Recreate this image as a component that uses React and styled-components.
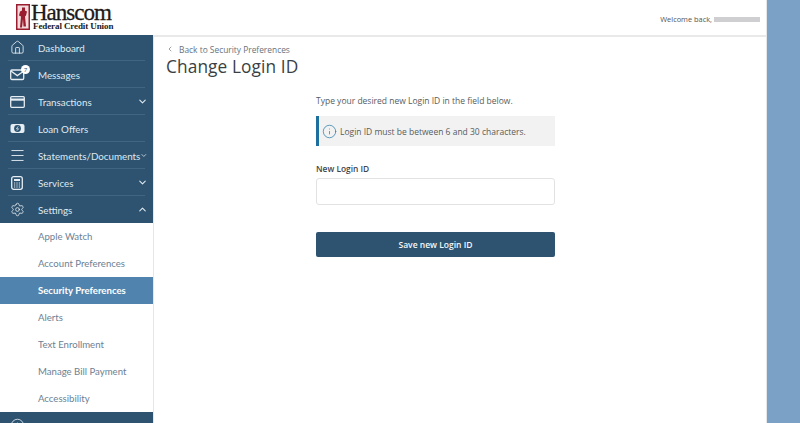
import React from "react";
import styled, { createGlobalStyle } from "styled-components";
import { ChevronDown, ChevronUp, ChevronLeft, Menu, Settings, House, Info } from "lucide-react";

const Global = createGlobalStyle`
  html, body { margin: 0; padding: 0; height: 100%; overflow: hidden; background: #fff; }
  body { font-family: "Open Sans", "Liberation Sans", sans-serif; }
  * { box-sizing: border-box; }
`;

const Page = styled.div`
  width: 800px; height: 423px; display: flex; overflow: hidden;
`;
const Main = styled.div`
  width: 767px; height: 423px; display: flex; flex-direction: column; background: #fff;
  border-right: 1px solid #e4e6e8;
`;
const Edge = styled.div`
  width: 33px; height: 423px; background: #7ba2c6;
`;
const Header = styled.header`
  height: 35px; flex: none; display: flex; align-items: center; justify-content: space-between;
  padding: 0 6px 0 16px; position: relative; z-index: 1; background: #fff;
`;
const Logo = styled.div`
  display: flex; align-items: center; gap: 1px; height: 30px; margin-top: -1px;
`;
const LogoText = styled.div`
  display: flex; flex-direction: column; font-family: "Liberation Serif", serif; color: #1d1a1a;
`;
const LogoName = styled.span`
  font-size: 23px; line-height: 19px; letter-spacing: -1px; font-weight: 400; -webkit-text-stroke: 0.3px #1d1a1a;
`;
const LogoSub = styled.span`
  font-size: 9px; line-height: 9px; letter-spacing: -0.1px; font-weight: 700; padding-left: 2px;
`;
const Welcome = styled.div`
  display: flex; align-items: center; gap: 2px; font-size: 7.4px; color: #555; margin-top: 3px;
`;
const Blur = styled.span`
  display: block; width: 46px; height: 5px; background: #cfcfd2; filter: blur(0.6px);
`;
const Body = styled.div`
  flex: 1; display: flex; min-height: 0;
`;
const Side = styled.nav`
  width: 154px; flex: none; display: flex; flex-direction: column; overflow: hidden; margin-top: -1px;
  border-right: 1px solid #e4e6e8;
`;
const NavRow = styled.div`
  height: 27px; flex: none; display: flex; align-items: center; position: relative;
  background: #2d5370; color: #dfe8ef; font-family: "Lato", sans-serif; font-size: 9.8px; padding: 0 5px 0 8px;
  &::after {
    content: ""; position: absolute; left: 8px; right: 8px; bottom: 0; height: 1px; background: ${p => p.$last ? "transparent" : "#3f6582"};
  }
`;
const IconSlot = styled.span`
  width: 18px; height: 18px; display: flex; align-items: center; justify-content: center; margin-right: 12px; flex: none; position: relative;
`;
const Badge = styled.span`
  position: absolute; top: -1px; right: -4px; width: 9px; height: 9px; border-radius: 50%;
  background: #fff; color: #2d5370; font-size: 6px; line-height: 9px; text-align: center;
`;
const NavLabel = styled.span`
  flex: 1; white-space: nowrap;
`;
const SubRow = styled.div`
  height: 27px; flex: none; display: flex; align-items: center; padding-left: 38px; font-family: "Lato", sans-serif; font-size: 9.6px;
  color: ${p => p.$active ? "#fff" : "#6d8193"}; background: ${p => p.$active ? "#5083ad" : "#fff"};
  font-weight: ${p => p.$active ? 700 : 400};
`;
const Content = styled.main`
  flex: 1; padding: 6px 0 0 12px; min-width: 0; border-top: 2px solid #e9e9e9;
`;
const Back = styled.div`
  display: flex; align-items: center; gap: 5px; font-size: 8.4px; color: #67737d; height: 12px;
`;
const Title = styled.h1`
  margin: -1px 0 0; font-weight: 400; font-size: 17.3px; line-height: 26px; color: #3a3f44; letter-spacing: 0.1px;
`;
const Form = styled.div`
  width: 239px; margin: 14px 0 0 150px; display: flex; flex-direction: column;
`;
const Lead = styled.p`
  margin: 0; font-size: 8.5px; line-height: 14px; color: #565c61;
`;
const Notice = styled.div`
  margin-top: 8px; height: 30px; display: flex; align-items: center; gap: 3px; background: #f2f2f2;
  border-left: 3px solid #1f6f9e; padding-left: 3px; font-size: 8.5px; color: #565c61;
`;
const FieldLabel = styled.label`
  margin-top: 16px; font-size: 8.4px; line-height: 14px; font-weight: 600; color: #3f454a;
`;
const Input = styled.input`
  margin-top: 2px; height: 27px; width: 100%; border: 1px solid #e2e2e2; border-radius: 3px; background: #fff; outline: none;
`;
const Save = styled.button`
  margin-top: 27px; height: 25px; width: 100%; border: 0; border-radius: 2px; background: #2d5370; color: #f4f7f9;
  font: 600 8.5px "Open Sans", sans-serif;
`;

const strokes = { fill: "none", stroke: "#e6edf3", strokeWidth: 1.3 };

const Mail = () => (
  <svg width="15" height="12" viewBox="0 0 15 12"><rect x="0.7" y="1" width="13" height="9.5" rx="1.2" {...strokes} /><path d="M1 2l6.3 4.6L14 2" {...strokes} /></svg>
);
const Card = () => (
  <svg width="15" height="12" viewBox="0 0 15 12"><rect x="0.7" y="0.7" width="13.6" height="10.6" rx="1" {...strokes} /><rect x="1" y="2.5" width="13" height="2.2" fill="#e6edf3" /></svg>
);
const Money = () => (
  <svg width="15" height="11" viewBox="0 0 15 11"><rect x="0.5" y="1" width="14" height="9" rx="2" fill="#e6edf3" /><circle cx="7.5" cy="5.5" r="3.4" fill="#2d5370" /><path d="M8.2 3.4L6.4 5.8h2.2L6.9 7.7" stroke="#e6edf3" strokeWidth="0.8" fill="none" /></svg>
);
const Calc = () => (
  <svg width="12" height="14" viewBox="0 0 12 14"><rect x="0.7" y="0.7" width="10.6" height="12.6" rx="2" {...strokes} /><rect x="3" y="3" width="6" height="2" fill="#e6edf3" /><path d="M3 7h6M3 9h6M3 11h6" stroke="#e6edf3" strokeWidth="1" strokeDasharray="1.2 1.2" /></svg>
);
const Seal = () => (
  <svg width="14" height="26" viewBox="0 0 14 26"><rect width="14" height="26" fill="#9b1c2e" /><rect x="1.5" y="1.5" width="11" height="23" fill="#f0dcdc" /><path d="M6 3.5h3v3l2 1-1 4-1 1 1 10H7.5L7 15l-1 8.5H4l1-11-2-1 1-4 2-1z" fill="#9b1c2e" /></svg>
);

const top = [
  { label: "Dashboard", icon: <House size={15} color="#e6edf3" strokeWidth={1.4} /> },
  { label: "Messages", icon: <><Mail /><Badge>7</Badge></> },
  { label: "Transactions", icon: <Card />, chev: "down" },
  { label: "Loan Offers", icon: <Money /> },
  { label: "Statements/Documents", icon: <Menu size={17} color="#e6edf3" strokeWidth={1.3} />, chev: "down" },
  { label: "Services", icon: <Calc />, chev: "down" },
  { label: "Settings", icon: <Settings size={15} color="#e6edf3" strokeWidth={1.3} />, chev: "up", last: true },
];
const subs = ["Apple Watch", "Account Preferences", "Security Preferences", "Alerts", "Text Enrollment", "Manage Bill Payment", "Accessibility"];

export default function App() {
  return (
    <>
      <Global />
      <Page>
        <Main>
          <Header>
            <Logo>
              <Seal />
              <LogoText>
                <LogoName>Hanscom</LogoName>
                <LogoSub>Federal Credit Union</LogoSub>
              </LogoText>
            </Logo>
            <Welcome>Welcome back, <Blur /></Welcome>
          </Header>
          <Body>
            <Side>
              {top.map(t => (
                <NavRow key={t.label} $last={t.last}>
                  <IconSlot>{t.icon}</IconSlot>
                  <NavLabel>{t.label}</NavLabel>
                  {t.chev === "down" && <ChevronDown size={11} strokeWidth={2.4} color="#dfe8ef" />}
                  {t.chev === "up" && <ChevronUp size={11} strokeWidth={2.4} color="#dfe8ef" />}
                </NavRow>
              ))}
              {subs.map(s => (
                <SubRow key={s} $active={s === "Security Preferences"}>{s}</SubRow>
              ))}
              <NavRow $last>
                <IconSlot><Info size={15} color="#e6edf3" strokeWidth={1.3} /></IconSlot>
                <NavLabel>Ask a Question</NavLabel>
              </NavRow>
            </Side>
            <Content>
              <Back><ChevronLeft size={8} color="#67737d" />Back to Security Preferences</Back>
              <Title>Change Login ID</Title>
              <Form>
                <Lead>Type your desired new Login ID in the field below.</Lead>
                <Notice><Info size={15} color="#2f7ea8" strokeWidth={1.2} />Login ID must be between 6 and 30 characters.</Notice>
                <FieldLabel>New Login ID</FieldLabel>
                <Input aria-label="New Login ID" />
                <Save>Save new Login ID</Save>
              </Form>
            </Content>
          </Body>
        </Main>
        <Edge />
      </Page>
    </>
  );
}
